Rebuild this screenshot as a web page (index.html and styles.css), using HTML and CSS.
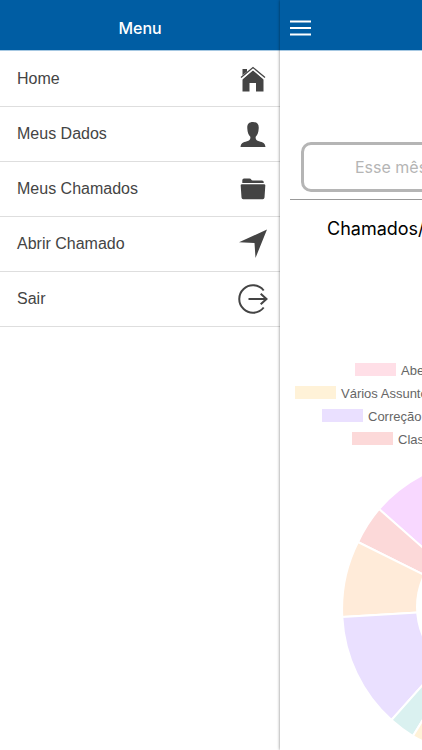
FILE: index.html
```html
<!DOCTYPE html>
<html lang="pt-BR">
<head>
    <meta charset="UTF-8">
    <meta name="viewport" content="width=device-width, initial-scale=1.0">
    <title>Chamados</title>
    <link rel="stylesheet" href="styles.css">
</head>
<body>
    <div class="app">
        <!-- Menu lateral -->
        <aside class="menu">
            <header class="bar bar-menu">
                <h1 class="bar-title">Menu</h1>
            </header>
            <nav class="menu-list">
                <a class="menu-item" href="#home">Home
                    <svg class="icon" viewBox="0 0 30 30" aria-hidden="true">
                        <path d="M15 6L4.500 15V27.500H11.500V19H18V27.500H25.500V15z" fill="#444"/>
                        <path d="M4.500 5h4.500v4.500l-4.500 4z" fill="#444"/>
                        <path d="M2.500 15L15 4.400L27.500 15" fill="none" stroke="#fff" stroke-width="3"/>
                        <path d="M3 13.600L15 3.500L27 13.600" fill="none" stroke="#444" stroke-width="1.300"/>
                    </svg>
                </a>
                <a class="menu-item" href="#dados">Meus Dados
                    <svg class="icon" viewBox="0 0 30 30" aria-hidden="true">
                        <path d="M15 3C10.500 3 9 5.500 9.300 9.500C9.500 13.500 10.500 16 12.300 17.700C12.700 20.500 11.500 21.500 9 22.200C5 23.300 3 24 2.500 28H27.500C27 24 25 23.300 21 22.200C18.500 21.500 17.300 20.500 17.700 17.700C19.500 16 20.500 13.500 20.700 9.500C21 5.500 19.500 3 15 3z" fill="#444"/>
                    </svg>
                </a>
                <a class="menu-item" href="#chamados">Meus Chamados
                    <svg class="icon" viewBox="0 0 30 30" aria-hidden="true">
                        <path d="M4.300 9V6.200Q4.300 4.500 6 4.500H11.500Q12.800 4.500 13.200 5.500Q13.500 6.500 14.800 6.500H24Q25.700 6.500 25.700 8V9z" fill="#444"/>
                        <path d="M4 10.200H26Q27.500 10.200 27.300 11.700L26.500 23.500Q26.300 25.200 24.800 25.200H5.200Q3.700 25.200 3.500 23.500L2.700 11.700Q2.500 10.200 4 10.200z" fill="#444"/>
                    </svg>
                </a>
                <a class="menu-item" href="#abrir">Abrir Chamado
                    <svg class="icon" viewBox="0 0 30 30" aria-hidden="true">
                        <path d="M29 0.500L1 13.300L16.500 14L17.500 29z" fill="#444"/>
                    </svg>
                </a>
                <a class="menu-item" href="#sair">Sair
                    <svg class="icon" viewBox="0 0 30 30" aria-hidden="true">
                        <path d="M25.700 6.500A13.700 13.700 0 1 0 25.700 23.500M10.500 15H28.500M22.700 9.700L28.500 15L22.700 20.300" fill="none" stroke="#444" stroke-width="2"/>
                    </svg>
                </a>
            </nav>
        </aside>

        <!-- Página principal -->
        <main class="page">
            <header class="bar bar-page">
                <button class="btn-menu" type="button" aria-label="Abrir menu">
                    <svg class="icon-menu" viewBox="0 0 21 16" aria-hidden="true">
                        <path d="M0 1.500H21M0 8H21M0 14.500H21" stroke="#fff" stroke-width="2"/>
                    </svg>
                </button>
            </header>
            <div class="content">
                <select class="period" aria-label="Período">
                    <option>Esse mês</option>
                </select>
                <hr class="divider">
                <h2 class="chart-title">Chamados/Categoria</h2>
                <ul class="legend">
                    <li class="legend-item indent-lg"><span class="swatch pink"></span>Abertura</li>
                    <li class="legend-item"><span class="swatch yellow"></span>Vários Assuntos</li>
                    <li class="legend-item indent-sm"><span class="swatch purple"></span>Correção</li>
                    <li class="legend-item indent-md"><span class="swatch red"></span>Classificação</li>
                </ul>
                <svg class="chart" viewBox="0 0 300 300" role="img" aria-label="Chamados por categoria">
                    <g stroke="#fff" stroke-width="2">
                        <path d="M150 151L38 52A149 149 0 0 1 150 1z" fill="#f8d8ff"/>
                        <path d="M150 151L17 85A149 149 0 0 1 38 52z" fill="#fcd9d9"/>
                        <path d="M150 151L1.300 160A149 149 0 0 1 17 85z" fill="#ffebd9"/>
                        <path d="M150 151L50.500 263A149 149 0 0 1 1.300 160z" fill="#eae0ff"/>
                        <path d="M150 151L72 279A149 149 0 0 1 50.500 263z" fill="#daf1f0"/>
                        <path d="M150 151L150 299A149 149 0 0 1 72 279z" fill="#fff2d8"/>
                        <path d="M150 151L150 1A149 149 0 0 1 150 299z" fill="#ffdfe7"/>
                    </g>
                    <circle cx="150" cy="150" r="75" fill="#fff"/>
                </svg>
            </div>
        </main>
    </div>
</body>
</html>
```
FILE: styles.css
```css
* {
    box-sizing: border-box;
}

body {
    margin: 0;
    font-family: Inter, "Liberation Sans", sans-serif;
    background-color: #fff;
    overflow: hidden;
}

.app {
    display: flex;
    height: 100vh;
    overflow: hidden;
}

/* Barra superior */
.bar {
    display: flex;
    align-items: center;
    height: 51px;
    padding-top: 5px;
    background-color: #005da3;
    border-bottom: 1px solid #a6c8e2;
}

.bar-menu {
    justify-content: center;
}

.bar-page {
    padding-left: 10px;
}

.bar-title {
    margin: 0;
    font-size: 16px;
    font-weight: 500;
    color: #fff;
}

.btn-menu {
    display: flex;
    padding: 0;
    border: none;
    background: none;
    cursor: pointer;
}

.icon-menu {
    width: 21px;
    height: 16px;
}

/* Menu lateral */
.menu {
    flex: 0 0 280px;
}

.menu-list {
    padding-top: 1px;
}

.menu-item {
    display: flex;
    align-items: center;
    justify-content: space-between;
    height: 55px;
    padding: 0 12px 0 17px;
    border-bottom: 1px solid #dedede;
    font-family: "Liberation Sans", Arial, sans-serif;
    font-size: 16px;
    color: #444;
    text-decoration: none;
}

.icon {
    width: 30px;
    height: 30px;
}

/* Página empurrada para a direita pelo menu */
.page {
    flex: 0 0 100%;
    background-color: #fff;
    box-shadow: 0 0 3px rgba(0, 0, 0, 0.5);
}

.content {
    padding: 91px 10px 0;
}

.period {
    display: block;
    width: calc(100% - 22px);
    height: 50px;
    margin: 0 auto;
    padding: 0 51px;
    border: 3px solid #b5b5b5;
    border-radius: 10px;
    appearance: none;
    background-color: #fff;
    font-family: inherit;
    font-size: 16px;
    color: #b5b5b5;
}

.divider {
    margin: 7px 0 0;
    border: none;
    border-top: 1px solid #999;
}

.chart-title {
    margin: 17px 0 0;
    padding-left: 37px;
    font-size: 18px;
    line-height: 24px;
    font-weight: 400;
    color: #000;
}

/* Gráfico */
.legend {
    margin: 118px 0 0;
    padding: 0 0 0 5px;
    list-style: none;
    font-family: "Liberation Sans", Arial, sans-serif;
    font-size: 13px;
    color: #666;
}

.legend-item {
    display: flex;
    align-items: center;
    gap: 5px;
    height: 23px;
    white-space: nowrap;
}

.indent-sm {
    padding-left: 27px;
}

.indent-md {
    padding-left: 57px;
}

.indent-lg {
    padding-left: 60px;
}

.swatch {
    width: 41px;
    height: 13px;
    margin-bottom: 2px;
}

.pink {
    background-color: #ffdfe7;
}

.yellow {
    background-color: #fff2d8;
}

.purple {
    background-color: #eae0ff;
}

.red {
    background-color: #fcd9d9;
}

.chart {
    display: block;
    width: 300px;
    height: 300px;
    margin: 6px auto 0;
}
```
